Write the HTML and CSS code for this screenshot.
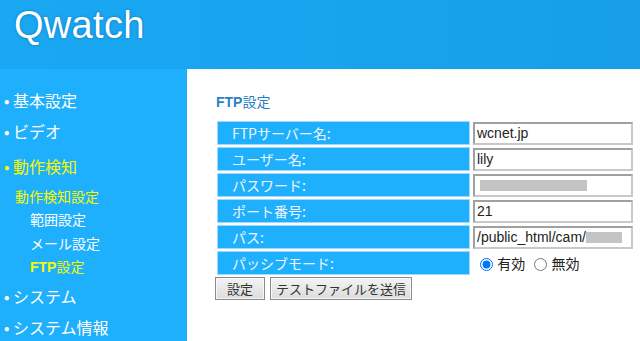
FILE: index.html
```html
<!DOCTYPE html>
<html lang="ja">
<head>
    <meta charset="UTF-8">
    <title>Qwatch - FTP設定</title>
    <link rel="stylesheet" href="styles.css">
</head>
<body>
    <div class="header">
        <div class="logo">Qwatch</div>
    </div>
    <div class="wrap">
        <div class="side">
            <div class="nav-top">• 基本設定</div>
            <div class="nav-top">• ビデオ</div>
            <div class="nav-top active">• 動作検知</div>
            <div class="nav-sub active">動作検知設定</div>
            <div class="nav-sub2">範囲設定</div>
            <div class="nav-sub2">メール設定</div>
            <div class="nav-sub2 active ftp"><b>FTP</b>設定</div>
            <div class="nav-top">• システム</div>
            <div class="nav-top">• システム情報</div>
        </div>
        <div class="main">
            <h2 class="title"><b>FTP</b>設定</h2>
            <table class="form-table">
                <tr>
                    <td class="label">FTPサーバー名:</td>
                    <td><div class="field">wcnet.jp</div></td>
                </tr>
                <tr>
                    <td class="label">ユーザー名:</td>
                    <td><div class="field">lily</div></td>
                </tr>
                <tr>
                    <td class="label">パスワード:</td>
                    <td><div class="field"><span class="redact pw"></span></div></td>
                </tr>
                <tr>
                    <td class="label">ポート番号:</td>
                    <td><div class="field">21</div></td>
                </tr>
                <tr>
                    <td class="label">パス:</td>
                    <td><div class="field">/public_html/cam/<span class="redact path"></span></div></td>
                </tr>
                <tr>
                    <td class="label">パッシブモード:</td>
                    <td class="radios">
                        <label><input type="radio" name="pasv" checked> 有効</label>
                        <label><input type="radio" name="pasv"> 無効</label>
                    </td>
                </tr>
            </table>
            <div class="buttons">
                <button class="btn btn-set">設定</button>
                <button class="btn">テストファイルを送信</button>
            </div>
        </div>
    </div>
</body>
</html>
```

FILE: styles.css
```css
* {
    box-sizing: border-box;
}

body {
    margin: 0;
    font-family: "Liberation Sans", "Noto Sans CJK JP", sans-serif;
    background-color: #ffffff;
    height: 341px;
    overflow: hidden;
}

.header {
    height: 69px;
    background: linear-gradient(to right, #1aa8f3, #169fe8);
    padding: 3px 0 0 14px;
}

.logo {
    font-size: 38px;
    color: #ffffff;
    line-height: 44px;
    text-shadow: 0 0 3px rgba(0, 60, 120, 0.45);
    letter-spacing: 0.3px;
}

.wrap {
    display: flex;
    height: 272px;
}

.side {
    width: 187px;
    background-color: #1eb0fd;
    color: #ffffff;
    padding-top: 16px;
    font-family: "Noto Sans CJK JP", sans-serif;
}

.nav-top {
    font-size: 16px;
    line-height: 31px;
    padding-left: 4px;
}

.nav-top.active {
    margin-top: 4px;
}

.nav-sub {
    font-size: 14px;
    line-height: 24px;
    padding-left: 15px;
    margin-top: 2px;
}

.nav-sub2 {
    font-size: 14px;
    line-height: 23.5px;
    padding-left: 30px;
}

.ftp {
    margin-bottom: 1px;
}

.ftp b,
.title b {
    font-family: "Liberation Sans", sans-serif;
    font-weight: bold;
}

.side .active {
    color: #f7f700;
}

.main {
    flex: 1;
    padding: 21px 0 0 28px;
}

.title {
    margin: 0 0 6px 1px;
    font-size: 14px;
    line-height: 22px;
    color: #2a7fc4;
    font-weight: normal;
    font-family: "Noto Sans CJK JP", sans-serif;
}

.form-table {
    border-collapse: separate;
    border-spacing: 2px;
    font-family: "Noto Sans CJK JP", sans-serif;
}

.form-table td {
    height: 24px;
    padding: 0;
}

.form-table td.label {
    width: 253px;
    background-color: #1eb0fd;
    border: 1px solid #9fd9fb;
    color: #eef6ff;
    font-size: 14px;
    padding-left: 14px;
}

.field {
    width: 160px;
    height: 23px;
    margin-left: 1px;
    border: 2px solid #a0a0a0;
    border-right-color: #c8c8c8;
    border-bottom-color: #c8c8c8;
    font-family: "Liberation Sans", sans-serif;
    font-size: 14px;
    color: #222222;
    line-height: 19px;
    padding-left: 2px;
    white-space: nowrap;
    overflow: hidden;
}

.redact {
    display: inline-block;
    background-color: #c4c4c4;
    height: 11px;
    vertical-align: -1px;
}

.redact.pw {
    width: 107px;
    margin-left: 3px;
}

.redact.path {
    width: 36px;
}

.radios {
    font-size: 14px;
    color: #222222;
    padding-left: 3px !important;
}

.radios label {
    margin-right: 1px;
}

.radios input {
    margin: 0 1px 0 5px;
    vertical-align: -2px;
}

.buttons {
    display: flex;
    gap: 5px;
}

.btn {
    height: 23px;
    padding: 0 5px;
    font-family: "Noto Sans CJK JP", sans-serif;
    font-size: 13px;
    color: #333333;
    background: linear-gradient(#f4f4f4, #dcdcdc);
    border: 1px solid #8a8a8a;
    border-radius: 0;
    box-shadow: inset 0 0 0 1px #f8f8f8;
}

.btn-set {
    width: 50px;
    padding: 0;
}
```
